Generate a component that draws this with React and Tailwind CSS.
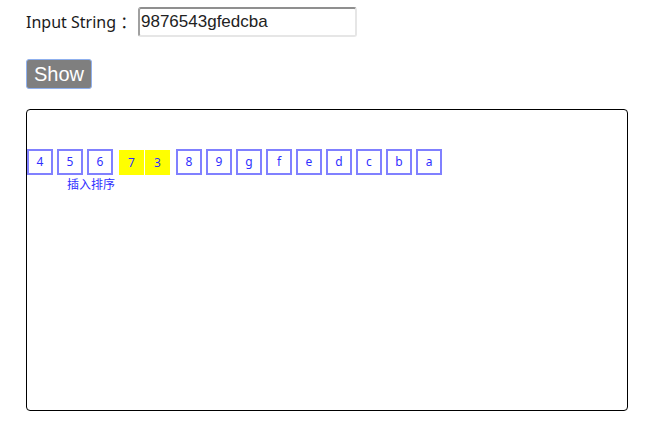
import React from "react";

const Cell = ({ ch, className = "" }) => (
  <div
    className={`w-[26px] h-[26px] shrink-0 border-2 border-[#8080ff] flex items-center justify-center text-[12px] leading-none text-[#2f2fff] ${className}`}
  >
    {ch}
  </div>
);

const Yellow = ({ ch, className = "" }) => (
  <div
    className={`w-[25px] h-[25px] shrink-0 bg-[#ffff00] flex items-center justify-center text-[12px] leading-none text-[#2f2fff] ${className}`}
  >
    {ch}
  </div>
);

export default function App() {
  const tail = ["8", "9", "g", "f", "e", "d", "c", "b", "a"];
  return (
    <div
      className="pl-[26px] pt-[7px] bg-white min-h-[431px]"
      style={{ fontFamily: '"Noto Sans", "Noto Sans CJK SC", sans-serif' }}
    >
      <div className="flex items-center h-[30px]">
        <div className="w-[112px] text-[16px] text-[#1a1a1a] leading-none whitespace-pre">Input String ：</div>
        <input
          defaultValue="9876543gfedcba"
          className="w-[219px] h-[30px] rounded-[3px] border-2 border-t-[#8f8f8f] border-l-[#a0a0a0] border-r-[#e6e6e6] border-b-[#e6e6e6] pl-[1px] text-[17px] text-[#222] outline-none"
          style={{ fontFamily: '"Liberation Sans", Arial, sans-serif' }}
        />
      </div>
      <button
        className="mt-[22px] w-[66px] h-[30px] rounded-[3px] border border-[#8fb0ee] bg-[#7f7f7f] text-white text-[20px] leading-none flex items-center justify-center"
        style={{ fontFamily: '"Liberation Sans", Arial, sans-serif' }}
      >
        Show
      </button>
      <div className="mt-[20px] w-[602px] h-[302px] border border-black rounded-[4px]">
        <div className="pt-[39px] flex items-start">
          <Cell ch="4" className="mr-[4px]" />
          <Cell ch="5" className="mr-[4px]" />
          <Cell ch="6" className="mr-[6px]" />
          <Yellow ch="7" className="mt-[1px] mr-[1px]" />
          <Yellow ch="3" className="mt-[1px] mr-[6px]" />
          {tail.map((c, i) => (
            <Cell key={i} ch={c} className="mr-[4px]" />
          ))}
        </div>
        <div className="ml-[40px] mt-[3px] text-[12px] leading-[14px] text-[#2f2fff]">插入排序</div>
      </div>
    </div>
  );
}
